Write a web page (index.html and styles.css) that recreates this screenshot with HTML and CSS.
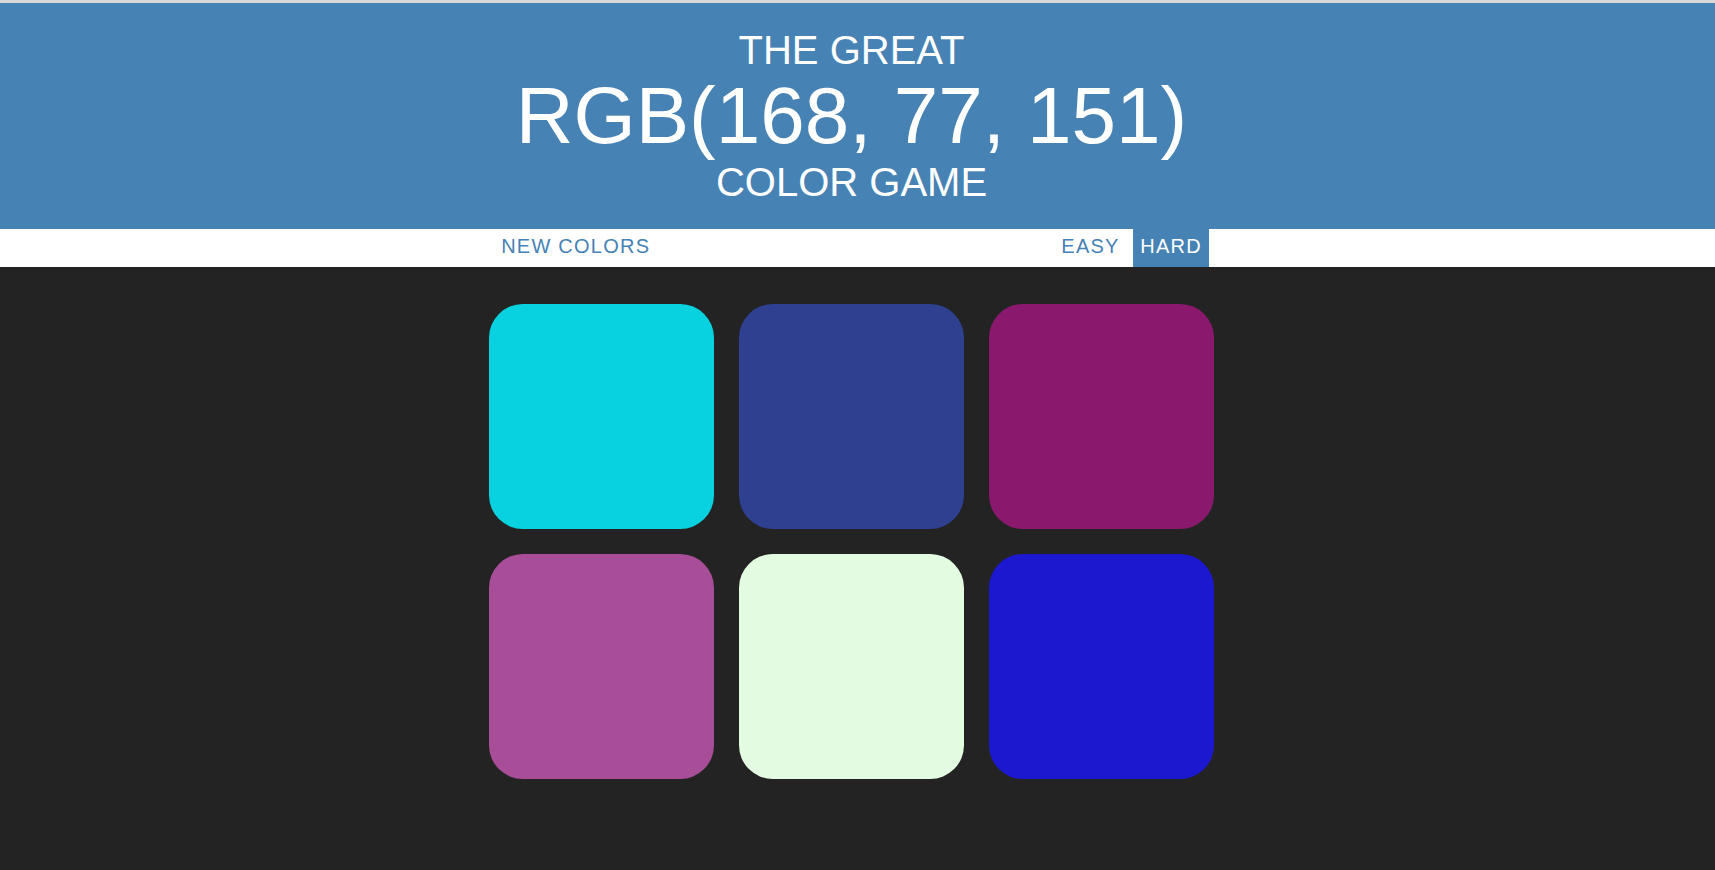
FILE: index.html
```html
<!DOCTYPE html>
<html lang="en">
<head>
	<meta charset="UTF-8">
	<title>Color Game</title>
	<link rel="stylesheet" href="styles.css">
</head>
<body>
	<h1 class="title">
		The Great
		<br>
		<span class="color-display">RGB(168, 77, 151)</span>
		<br>
		Color Game
	</h1>

	<div class="stripe">
		<button class="reset">New Colors</button>
		<span class="message"></span>
		<button class="mode">Easy</button>
		<button class="mode selected">Hard</button>
	</div>

	<main>
		<div class="container">
			<div class="square" style="background: rgb(8, 210, 223);"></div>
			<div class="square" style="background: rgb(46, 64, 143);"></div>
			<div class="square" style="background: rgb(138, 25, 110);"></div>
			<div class="square" style="background: rgb(168, 77, 151);"></div>
			<div class="square" style="background: rgb(227, 251, 224);"></div>
			<div class="square" style="background: rgb(27, 24, 208);"></div>
		</div>
	</main>
</body>
</html>
```

FILE: styles.css
```css
body {
	margin: 0;
	border-top: 3px solid #d8d8d8;
	background-color: #232323;
	font-family: "Liberation Sans", Arial, sans-serif;
}

/* 标题 */
.title {
	margin: 0;
	padding: 25px 12px 25px 0;
	background: steelblue;
	color: white;
	font-size: 40px;
	font-weight: normal;
	line-height: 1.1;
	text-align: center;
	text-transform: uppercase;
}
.color-display {
	font-size: 200%;
}

/* 按钮条 */
.stripe {
	display: flex;
	justify-content: center;
	gap: 5.5px;
	height: 37.5px;
	padding-right: 12px;
	background: white;
}
.stripe button {
	height: 100%;
	padding: 0 7.5px 2px;
	border: none;
	background: none;
	color: steelblue;
	font: 20px "Liberation Sans", Arial, sans-serif;
	letter-spacing: 1.25px;
	text-transform: uppercase;
	cursor: pointer;
	outline: none;
}
.stripe button:hover,
.stripe .selected {
	background: steelblue;
	color: white;
}
.message {
	width: 385px;
}

/* 色块 */
main {
	padding-right: 12px;
}
.container {
	display: grid;
	grid-template-columns: repeat(3, 1fr);
	gap: 25px;
	max-width: 750px;
	margin: 25px auto;
	padding: 12.5px;
	box-sizing: border-box;
}
.square {
	aspect-ratio: 1;
	border-radius: 15%;
	cursor: pointer;
}
```
